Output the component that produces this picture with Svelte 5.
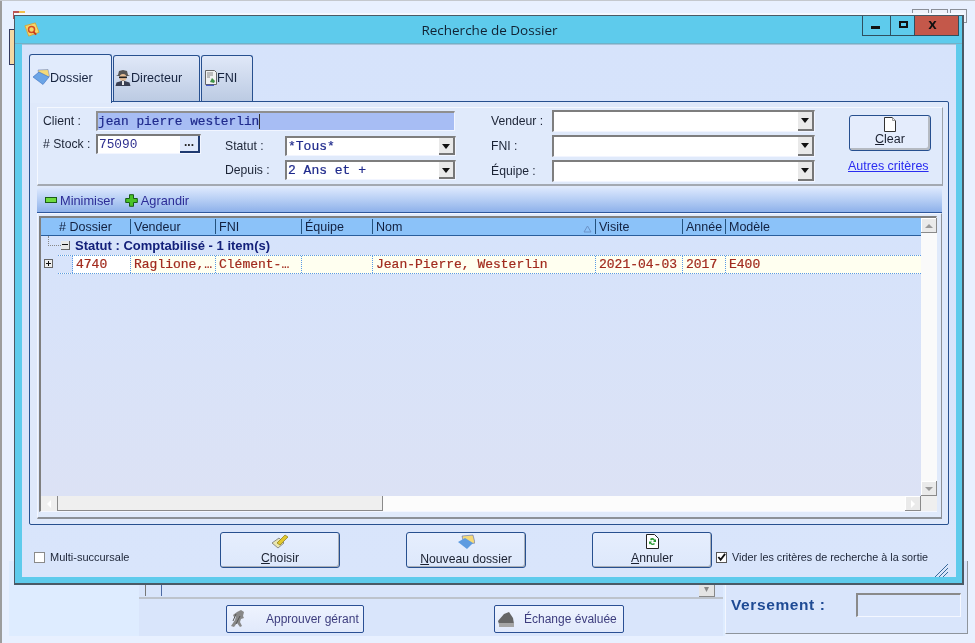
<script>
  const cols = [
    { t: '# Dossier', w: 89, pl: 15, v: '4740' },
    { t: 'Vendeur', w: 85, v: 'Raglione,…' },
    { t: 'FNI', w: 86, v: 'Clément-…' },
    { t: 'Équipe', w: 71, v: '' },
    { t: 'Nom', w: 223, v: 'Jean-Pierre, Westerlin', sort: true },
    { t: 'Visite', w: 87, v: '2021-04-03' },
    { t: 'Année', w: 43, v: '2017' },
    { t: 'Modèle', w: 197, v: 'E400' }
  ];
</script>

<div class="desk">
  <div class="behind-title">5431 - Collet de Montréal</div>
  <div class="behind-ctrls"><i></i><i></i><i></i></div>
  <div class="behind-icon"></div>
  <div class="behind-side"></div>

  <div class="behind-bottom">
    <div class="combo-strip"><span class="strip-cell"></span><span class="strip-arrow">▾</span></div>
    <div class="behind-actions">
      <button class="act a1">
        <svg width="16" height="20" viewBox="0 0 16 20"><path d="M11 1l3 2-1 4 1 2-3 1-1 3 2 4-2 1-3-4-3 4-3-1 4-6 1-4-2 1-1-2 4-3z" fill="#888"/><path d="M3 12l3-7M6 15l4-8" stroke="#555" fill="none"/></svg>
        <span>Approuver gérant</span>
      </button>
      <button class="act a2">
        <svg width="18" height="17" viewBox="0 0 18 17"><path d="M1 10l6-7 5-2 4 6 1 6H2z" fill="#666"/><path d="M2 12h15v4H2z" fill="#a5a5a5"/></svg>
        <span>Échange évaluée</span>
      </button>
    </div>
  </div>

  <div class="versement">
    <span>Versement :</span>
    <div class="v-input"></div>
  </div>

  <section class="window">
    <header class="titlebar">
      <svg class="appicon" width="16" height="16" viewBox="0 0 17 17">
        <path d="M1 4l11-3 4 10-11 4z" fill="#f4d76a" stroke="#d9a93a"/>
        <circle cx="8" cy="8" r="3.200" fill="none" stroke="#d84a20" stroke-width="1.600"/>
        <path d="M10 10.500l3 3" stroke="#c83a18" stroke-width="2"/>
      </svg>
      <h1>Recherche de Dossier</h1>
      <div class="ctrls">
        <div class="ctl c-min"><b></b></div>
        <div class="ctl c-max"><b></b></div>
        <div class="ctl c-close">X</div>
      </div>
    </header>

    <div class="client">
      <nav class="tabs">
        <div class="tab active">
          <svg width="17" height="17" viewBox="0 0 17 17"><path d="M5 1l10-.5 1.500 7-10 2z" fill="#f5d978" stroke="#5a78c8" stroke-width=".5"/><path d="M0 8l6-5 10 5-6 7.500z" fill="#6aa4e6" stroke="#3b6fc0" stroke-width=".6"/></svg>
          <span>Dossier</span>
        </div>
        <div class="tab t2">
          <svg width="16" height="17" viewBox="0 0 16 17"><path d="M3 6l1-4 4-1 4 1 1 4 2 1H1z" fill="#555"/><circle cx="8" cy="8.500" r="3.500" fill="#e4bd96"/><path d="M4 7.500h8v1.600H4z" fill="#222"/><path d="M.5 17l1-3.500 6.500-2 6.500 2 1 3.500z" fill="#3a3f52"/><path d="M7 12h2v4H7z" fill="#e9e9e9"/></svg>
          <span>Directeur</span>
        </div>
        <div class="tab t3">
          <svg width="12" height="16" viewBox="0 0 12 16"><path d="M.5.500h9l2 2v12h-11z" fill="#f1f1f1" stroke="#666"/><path d="M2 3h6M2 5h6M2 7h3" stroke="#888"/><path d="M5 12l2-4 3 3-1 2z" fill="#3f9146"/><path d="M1 15.300h8" stroke="#2a3fc0"/></svg>
          <span>FNI</span>
        </div>
      </nav>

      <div class="tabpanel">
        <div class="search">
          <div class="s-left">
            <div class="row-client">
              <label for="cl">Client :</label>
              <div class="client-input" id="cl">jean pierre westerlin<i class="caret"></i></div>
            </div>
            <div class="s-sub">
              <div class="row-stock">
                <span class="lab">#&nbsp;Stock :</span>
                <div class="stock"><span>75090</span><button class="dots">...</button></div>
              </div>
              <div class="s-status">
                <div class="f f1"><span class="lab l-status">Statut :</span><div class="combo w170"><span>*Tous*</span><em></em></div></div>
                <div class="f f2"><span class="lab l-status">Depuis :</span><div class="combo w170"><span>2 Ans et +</span><em></em></div></div>
              </div>
            </div>
          </div>
          <div class="s-mid">
            <div class="f"><span class="lab l-mid">Vendeur :</span><div class="combo wide"><em></em></div></div>
            <div class="f"><span class="lab l-mid">FNI :</span><div class="combo wide"><em></em></div></div>
            <div class="f"><span class="lab l-mid">Équipe :</span><div class="combo wide"><em></em></div></div>
          </div>
          <div class="s-right">
            <button class="clear">
              <svg width="14" height="15" viewBox="0 0 14 15"><path d="M1.500.500h8l3 3v11h-11z" fill="#fff" stroke="#333"/><path d="M9.500.500v3h3" fill="#eee" stroke="#999"/></svg>
              <span><u>C</u>lear</span>
            </button>
            <a href="#top" class="link">Autres critères</a>
          </div>
        </div>

        <div class="toolbar">
          <span class="tool"><i class="ico-min"></i>Minimiser</span>
          <span class="tool"><svg width="13" height="13" viewBox="0 0 13 13"><path d="M4.500 .7h4v3.800h3.800v4H8.500v3.800h-4V8.500H.7v-4h3.800z" fill="#49c326" stroke="#1a5d18"/></svg>Agrandir</span>
        </div>

        <div class="gridbox">
          <div class="grid">
            <div class="g-main">
              <div class="g-head">
                {#each cols as c, i}
                  <div class="hc" class:nosep={i === 0} style="width:{c.w}px">
                    <span style={c.pl ? `padding-left:${c.pl}px` : ''}>{c.t}</span>
                    {#if c.sort}<svg class="sort" width="9" height="8" viewBox="0 0 9 8"><path d="M4.500 1L8 7H1z" fill="none" stroke="#6c93c8"/></svg>{/if}
                  </div>
                {/each}
              </div>
              <div class="g-body">
                <div class="g-group">
                  <i class="tree-h"></i>
                  <span class="minus"></span>
                  <strong>Statut : Comptabilisé - 1 item(s)</strong>
                </div>
                <div class="g-row">
                  <span class="plus"></span>
                  {#each cols as c, i}
                    <div class="dc" class:first={i === 0} style="width:{c.w}px">
                      {#if i === 0}<i class="indent"></i>{/if}<span>{c.v}</span>
                    </div>
                  {/each}
                </div>
              </div>
              <div class="hscroll">
                <div class="sb-btn"><span class="tri-l"></span></div>
                <div class="thumb"></div>
                <div class="track"></div>
                <div class="sb-btn raised"><span class="tri-r"></span></div>
              </div>
            </div>
            <div class="vscroll">
              <div class="sb-btn v raised"><span class="tri-u"></span></div>
              <div class="vtrack"></div>
              <div class="sb-btn v raised"><span class="tri-d"></span></div>
              <div class="corner"></div>
            </div>
          </div>
        </div>
      </div>

      <footer class="bottom">
        <div class="chk c1"><span class="box"></span><span>Multi-succursale</span></div>
        <button class="big b1">
          <svg width="18" height="15" viewBox="0 0 18 15"><path d="M1 9l7-5 5 5-6 5z" fill="#e9e6b0" stroke="#666" stroke-width=".7"/><path d="M6 9l8-8 3 2-8 8z" fill="#e2c82e" stroke="#8a7a14" stroke-width=".7"/></svg>
          <span><u>C</u>hoisir</span>
        </button>
        <button class="big b2">
          <svg width="17" height="16" viewBox="0 0 17 16"><path d="M4 2l11-1 2 8-11 2z" fill="#f5d978" stroke="#3a55b0" stroke-width=".5"/><path d="M0 8l7-4 8 5-6 6z" fill="#5d9be0"/></svg>
          <span><u>N</u>ouveau dossier</span>
        </button>
        <button class="big b3">
          <svg width="13" height="15" viewBox="0 0 13 15"><path d="M.5.500h8l4 4v10H.5z" fill="#fff" stroke="#222"/><path d="M4 5a3 3 0 0 1 5 1l1-1v3H7l1-1a2 2 0 0 0-3-.5zM9 10a3 3 0 0 1-5-.5l-1 1V7.500h3L5 8.500a2 2 0 0 0 3 .5z" fill="#2c9a35"/></svg>
          <span><u>A</u>nnuler</span>
        </button>
        <div class="chk c2"><span class="box on"><svg width="10" height="10" viewBox="0 0 10 10"><path d="M1.500 5l2.500 3 5-6.500" fill="none" stroke="#111" stroke-width="2"/></svg></span><span>Vider les critères de recherche à la sortie</span></div>
        <svg class="grip" width="13" height="13" viewBox="0 0 13 13"><path d="M0 13L13 0M4 13l9-9M8 13l5-5" stroke="#3a6a9a" fill="none"/></svg>
      </footer>
    </div>
  </section>
</div>

<style>
  :global(body) { margin: 0; }
  * { box-sizing: border-box; }
  .desk {
    position: relative; width: 975px; height: 643px; overflow: hidden;
    background: #e8f0ff; font-family: "Liberation Sans", sans-serif; font-size: 12.200px; color: #1e2a44;
    border-top: 1px solid #c4c8ce; filter: blur(.3px);
  }
  .desk::before { content: ''; position: absolute; left: 0; top: 0; bottom: 0; width: 2px; background: #9d9d9d; }
  button { font: inherit; color: inherit; padding: 0; margin: 0; }

  .behind-title { position: absolute; left: 396px; top: 9px; height: 5px; overflow: hidden; font-size: 13px; line-height: 15px; letter-spacing: .6px; color: #333; white-space: nowrap; }
  .behind-ctrls { position: absolute; left: 912px; top: 8px; display: flex; gap: 2px; }
  .behind-ctrls i { width: 17px; height: 14px; border: 1px solid #8a8f98; background: #eef2fb; }
  .behind-icon { position: absolute; left: 13px; top: 10px; width: 12px; height: 8px; background: linear-gradient(90deg, #b55 50%, #eec04c 50%); }
  .behind-side { position: absolute; left: 9px; top: 28px; width: 8px; height: 36px; background: #f4d9a4; border: 1px solid #333a60; }

  .behind-bottom {
    position: absolute; left: 9px; top: 560px; width: 716px; height: 75px; background: #deecff;
    padding-left: 130px; display: flex; flex-direction: column;
  }
  .combo-strip {
    background: #d9e5fb; height: 38px; width: 584px; padding-left: 6px; flex: none;
    border-bottom: 2px solid #bdc3cc; display: flex; align-items: flex-end; position: relative;
  }
  .strip-cell { width: 17px; height: 15px; border-left: 1px solid #777; border-right: 1px solid #4c6aa5; margin-bottom: 1px; }
  .strip-arrow { position: absolute; right: 8px; bottom: 0; width: 16px; height: 14px; background: #e4e4e4; color: #888; text-align: center; line-height: 12px; font-size: 10px; border-right: 1px solid #888; border-bottom: 1px solid #888; }
  .behind-actions { flex: 1; background: #d9e5fb; padding: 6px 0 0 87px; display: flex; align-items: flex-start; width: 584px; }
  .act {
    height: 28px; display: flex; align-items: center; border: 1px solid #2a4f94; border-radius: 2px;
    background: linear-gradient(#eef3fe, #e1e9fb); color: #3d3d7e; font-size: 12px;
  }
  .a1 { width: 138px; padding-left: 3px; }
  .a1 span { margin-left: 20px; }
  .a2 { width: 130px; margin-left: 130px; padding-left: 2px; }
  .a2 span { margin-left: 9px; }
  .versement {
    position: absolute; left: 725px; top: 560px; width: 243px; height: 73px; background: #d9e5fb;
    border-right: 1px solid #8e949c; border-bottom: 1px solid #8e949c; border-left: 1px solid #f2f6ff;
    padding: 34px 6px 0 5px; display: flex; justify-content: space-between;
    color: #1e4a94; font-weight: 700; font-size: 15.500px; letter-spacing: .6px; line-height: 20px;
  }
  .v-input { width: 105px; height: 24px; border: 1px solid #f4f7ff; border-top: 2px solid #8a8a8a; border-left: 2px solid #8a8a8a; margin-top: -2px; }

  .window {
    position: absolute; left: 14px; top: 14px; width: 950px; height: 570px;
    background: #5ecbec; border: 1px solid #4a5a66; border-right-width: 2px; border-bottom-width: 2px;
    display: flex; flex-direction: column;
    box-shadow: 0 -2px 0 #f4f8ff;
  }
  .titlebar { height: 28px; display: flex; align-items: flex-start; position: relative; flex: none; border-bottom: 1px solid #6fb1c8; }
  .appicon { margin: 6px 0 0 9px; }
  h1 {
    position: absolute; left: 0; right: 0; top: 5px; margin: 0; text-align: center; font-weight: 400; line-height: 18px;
    font-family: "Open Sans", sans-serif; font-size: 13.500px; color: #123; padding-left: 2px;
  }
  .ctrls { position: absolute; right: 3px; top: 0; display: flex; height: 20px; border: 1px solid #2e4f5f; border-top: 0; }
  .ctl { display: flex; align-items: center; justify-content: center; border-right: 1px solid #2e4f5f; }
  .c-min { width: 28px; } .c-min b { width: 9px; height: 3px; background: #111; margin: 4px 2px 0 0; }
  .c-max { width: 24px; } .c-max b { width: 9px; height: 7px; border: 2px solid #111; margin: -3px 0 0 2px; }
  .c-close { width: 43px; background: #c4584a; font-weight: 700; font-family: "DejaVu Sans", sans-serif; font-size: 11px; border: 0; color: #111; padding-right: 8px; }

  .client {
    flex: 1; margin: 0 6px 6px 7px; background: linear-gradient(#d6e3fb, #d9e5fb); position: relative;
    display: flex; flex-direction: column; padding: 7px 8px 0 7px; border-top: 1px solid #a9c2d8;
  }
  .tabs { display: flex; align-items: flex-end; height: 49px; flex: none; position: relative; z-index: 2; gap: 1px; }
  .tab {
    border: 1.500px solid #27508f; border-bottom: 0; border-radius: 3px 3px 0 0;
    height: 46px; display: flex; align-items: center; font-size: 12.600px; color: #16233f; padding-bottom: 2px;
    background: linear-gradient(#e0e8f8, #bccbe3);
  }
  .tab.active { width: 83px; height: 49px; background: #e1ebfc; padding-left: 3px; padding-bottom: 3px; margin-bottom: -2px; border-bottom: 0; }
  .t2 { width: 87px; padding-left: 1px; }
  .t3 { width: 52px; padding-left: 3px; }
  .tab svg { margin-right: 0; flex: none; }

  .tabpanel {
    height: 424px; border: 1.500px solid #27508f; border-radius: 0 2px 2px 2px; background: #dfe9fb;
    width: 920px; padding: 5px 5px 0 7px; display: flex; flex-direction: column; flex: none;
  }
  .search {
    height: 79px; flex: none; display: flex; border-top: 1px solid #f4f8ff; border-left: 1px solid #f4f8ff;
    border-right: 1px solid #9ca2aa; border-bottom: 2px solid #a4a9b1; background: #e0eafb; position: relative;
  }
  .lab { white-space: nowrap; color: #1c2436; }
  .s-left { width: 420px; padding: 2px 0 0 5px; flex: none; }
  .row-client { display: flex; align-items: center; height: 21px; }
  .row-client label { width: 53px; color: #1c2436; }
  .client-input {
    flex: 1; height: 20px; background: #a7bdf4; font-family: "Liberation Mono", monospace; font-size: 12.800px; color: #1f2a8c; -webkit-text-stroke: .2px #1f2a8c;
    border: 1px solid #f1f5ff; border-top: 2px solid #8f8f8f; border-left: 2px solid #8f8f8f; line-height: 17px; margin-right: 3px;
    display: flex; align-items: center;
  }
  .caret { display: inline-block; width: 1px; height: 15px; background: #333; }
  .s-sub { display: flex; margin-top: 3px; }
  .row-stock { width: 182px; display: flex; height: 20px; align-items: center; flex: none; }
  .row-stock .lab { width: 53px; }
  .stock {
    width: 105px; height: 20px; background: #fff; border: 1px solid #f3f6ff; border-top: 2px solid #7a7a7a; border-left: 2px solid #7a7a7a;
    display: flex; align-items: center; font-family: "Liberation Mono", monospace; color: #2e2f8f; padding-left: 1px; font-size: 12.800px; justify-content: space-between;
  }
  .dots {
    width: 20px; height: 17px; border: 0; background: #dfe9fb; border-right: 2px solid #1f3a70; border-bottom: 2px solid #1f3a70;
    font-size: 12px; font-weight: 700; line-height: 8px; color: #222; padding-bottom: 4px; font-family: "Liberation Sans", sans-serif;
  }
  .s-status { display: flex; flex-direction: column; gap: 4px; padding-top: 2px; }
  .f { display: flex; align-items: center; }
  .l-status { width: 60px; }
  .combo {
    height: 20px; background: #fff; border: 1px solid #f2f5ff; border-top: 2px solid #7e7e7e; border-left: 2px solid #7e7e7e;
    display: flex; justify-content: space-between; align-items: center; font-family: "Liberation Mono", monospace; color: #1f2a8c; padding-left: 1px; font-size: 13px; -webkit-text-stroke: .2px #1f2a8c;
    position: relative;
  }
  .combo em {
    position: absolute; right: 0; top: 0; bottom: 0; width: 16px; background: #e9e9e9; border-right: 2px solid #777; border-bottom: 2px solid #777;
  }
  .combo em::after {
    content: ''; position: absolute; left: 3px; top: 6px; border: 4px solid transparent; border-top: 5px solid #111; border-bottom: 0;
  }
  .w170 { width: 171px; }
  .s-mid { padding: 2px 0 0 33px; width: 360px; flex: none; display: flex; flex-direction: column; gap: 3px; }
  .l-mid { width: 61px; }
  .wide { width: 263px; height: 22px; }
  .s-right { padding: 7px 0 0 31px; display: flex; flex-direction: column; }
  .clear {
    width: 82px; height: 36px; display: flex; flex-direction: column; align-items: center; border: 1px solid #27508f; border-radius: 3px;
    background: #e4ecfc; box-shadow: inset -2px -2px 0 #b5bac2; font-size: 12.500px; padding-top: 1px; line-height: 13px; color: #1a2030; flex: none;
  }
  .clear svg { margin-bottom: 1px; flex: none; }
  .link { color: #2a2cf0; font-size: 12.500px; margin-top: 8px; margin-left: -1px; white-space: nowrap; }

  .toolbar {
    height: 25px; flex: none; margin-top: 2px; display: flex; align-items: center; gap: 10px; padding-left: 8px; font-size: 12.800px;
    background: linear-gradient(#dbe7fd, #b9d0f5 45%, #8eb1ea); border-bottom: 1px solid #2c569c; border-radius: 3px 0 0 0; color: #2c2c96; width: 905px;
  }
  .tool { display: flex; align-items: center; gap: 3px; }
  .ico-min { width: 12px; height: 6px; background: #6fdc3f; border: 1px solid #1a5d18; }

  .gridbox {
    height: 306px; flex: none; padding: 2px 4px 6px 1px; border-top: 1px solid #f3f6ff; border-left: 1px solid #f3f6ff;
    border-right: 1px solid #8c9198; border-bottom: 2px solid #8c9198; width: 905px; background: #e0eafb;
  }
  .grid { height: 296px; width: 898px; display: flex; border: 1px solid #f4f7ff; border-top: 2px solid #7f7f7f; border-left: 2px solid #7f7f7f; background: #fafafa; }
  .g-main { width: 880px; flex: none; display: flex; flex-direction: column; }
  .g-head { height: 18px; flex: none; display: flex; background: #8bc2f9; border-bottom: 1px solid #2a5e9c; }
  .hc { display: flex; align-items: center; border-left: 1px solid #24527e; position: relative; padding-left: 3px; color: #122140; font-size: 12.500px; height: 15px; margin-top: 1px; flex: none; white-space: nowrap; }
  .hc.nosep { border-left: 0; }
  .sort { position: absolute; right: 3px; top: 6px; }
  .g-body { flex: 1; background: linear-gradient(#d6e3fb, #dce2f5); position: relative; }
  .g-group { height: 19px; display: flex; align-items: center; color: #13207a; font-size: 13px; padding-left: 20px; position: relative; }
  .tree-h { position: absolute; left: 7px; top: 0; height: 10px; width: 13px; border-left: 1px dotted #888; border-bottom: 1px dotted #888; }
  .minus { width: 9px; height: 9px; background: #e7e7e7; border-right: 1px solid #666; border-bottom: 1px solid #666; position: relative; margin-right: 5px; flex: none; }
  .minus::after { content: ''; position: absolute; left: 1px; top: 3px; width: 6px; height: 1px; background: #111; }
  .g-row {
    height: 19px; display: flex; align-items: center; background: #fffff0; position: relative; margin-left: 17px;
    border-top: 1px dotted #5a9ae6; border-bottom: 1px dotted #5a9ae6; font-family: "Liberation Mono", monospace; color: #a12a1d; font-size: 13px; -webkit-text-stroke: .2px #a12a1d;
  }
  .plus { position: absolute; left: -14px; top: 3px; width: 9px; height: 9px; background: #efefef; border: 1px solid #666; }
  .plus::before { content: ''; position: absolute; left: 1px; top: 3px; width: 5px; height: 1px; background: #111; }
  .plus::after { content: ''; position: absolute; left: 3px; top: 1px; width: 1px; height: 5px; background: #111; }
  .dc { flex: none; height: 100%; border-left: 1px dotted #5a9ae6; display: flex; align-items: center; padding-left: 3px; white-space: nowrap; overflow: hidden; }
  .dc.first { width: 72px !important; background: #fff; padding-left: 0; border-left: 0; }
  .indent { width: 15px; height: 100%; background: #d8e4fb; flex: none; border-right: 1px dotted #5a9ae6; margin-right: 3px; }
  .hscroll { height: 15px; flex: none; display: flex; background: #fcfcfc; }
  .sb-btn { width: 16px; height: 15px; background: #efefef; display: flex; align-items: center; justify-content: center; flex: none; }
  .sb-btn.raised { background: #eaeaea; box-shadow: inset -1px -1px 0 #8a8a8a, inset 1px 1px 0 #fff; }
  .sb-btn.v { width: 16px; }
  .thumb { width: 326px; background: #efefef; border-left: 1px solid #8a8a8a; border-right: 1px solid #8a8a8a; border-bottom: 1px solid #8a8a8a; flex: none; }
  .track { flex: 1; background: #fcfcfc; }
  .tri-l, .tri-r, .tri-u, .tri-d { width: 0; height: 0; border: 4px solid transparent; }
  .tri-l { border-right: 4px solid #fff; border-left: 0; }
  .tri-r { border-left: 4px solid #fff; border-right: 0; }
  .tri-u { border-bottom: 4px solid #9a9a9a; border-top: 0; }
  .tri-d { border-top: 4px solid #9a9a9a; border-bottom: 0; }
  .vscroll { width: 16px; flex: none; display: flex; flex-direction: column; background: #fafafa; }
  .vtrack { flex: 1; }
  .corner { height: 15px; background: #efefef; flex: none; }

  .bottom { flex: 1; position: relative; display: flex; align-items: center; padding-left: 191px; gap: 66px; padding-bottom: 2px; }
  .big {
    width: 120px; height: 36px; border: 1px solid #27508f; border-radius: 3px; background: linear-gradient(#e6eefd, #dde8fb); padding-top: 1px;
    box-shadow: inset -1px -1px 0 #a9afb8; display: flex; flex-direction: column; align-items: center; font-size: 12.200px; line-height: 14px; color: #1a2030; flex: none;
  }
  .big svg { margin-bottom: 2px; flex: none; }
  .chk { display: flex; align-items: center; position: absolute; font-size: 11px; color: #1c2436; top: 26px; }
  .c1 { left: 5px; }
  .c2 { left: 687px; font-size: 10.800px; }
  .box { width: 11px; height: 11px; background: #fff; border: 1px solid #8a8a8a; margin-right: 5px; display: flex; align-items: center; justify-content: center; flex: none; }
  .box.on { border-color: #555; }
  .grip { position: absolute; right: 0; bottom: 0; }
</style>
